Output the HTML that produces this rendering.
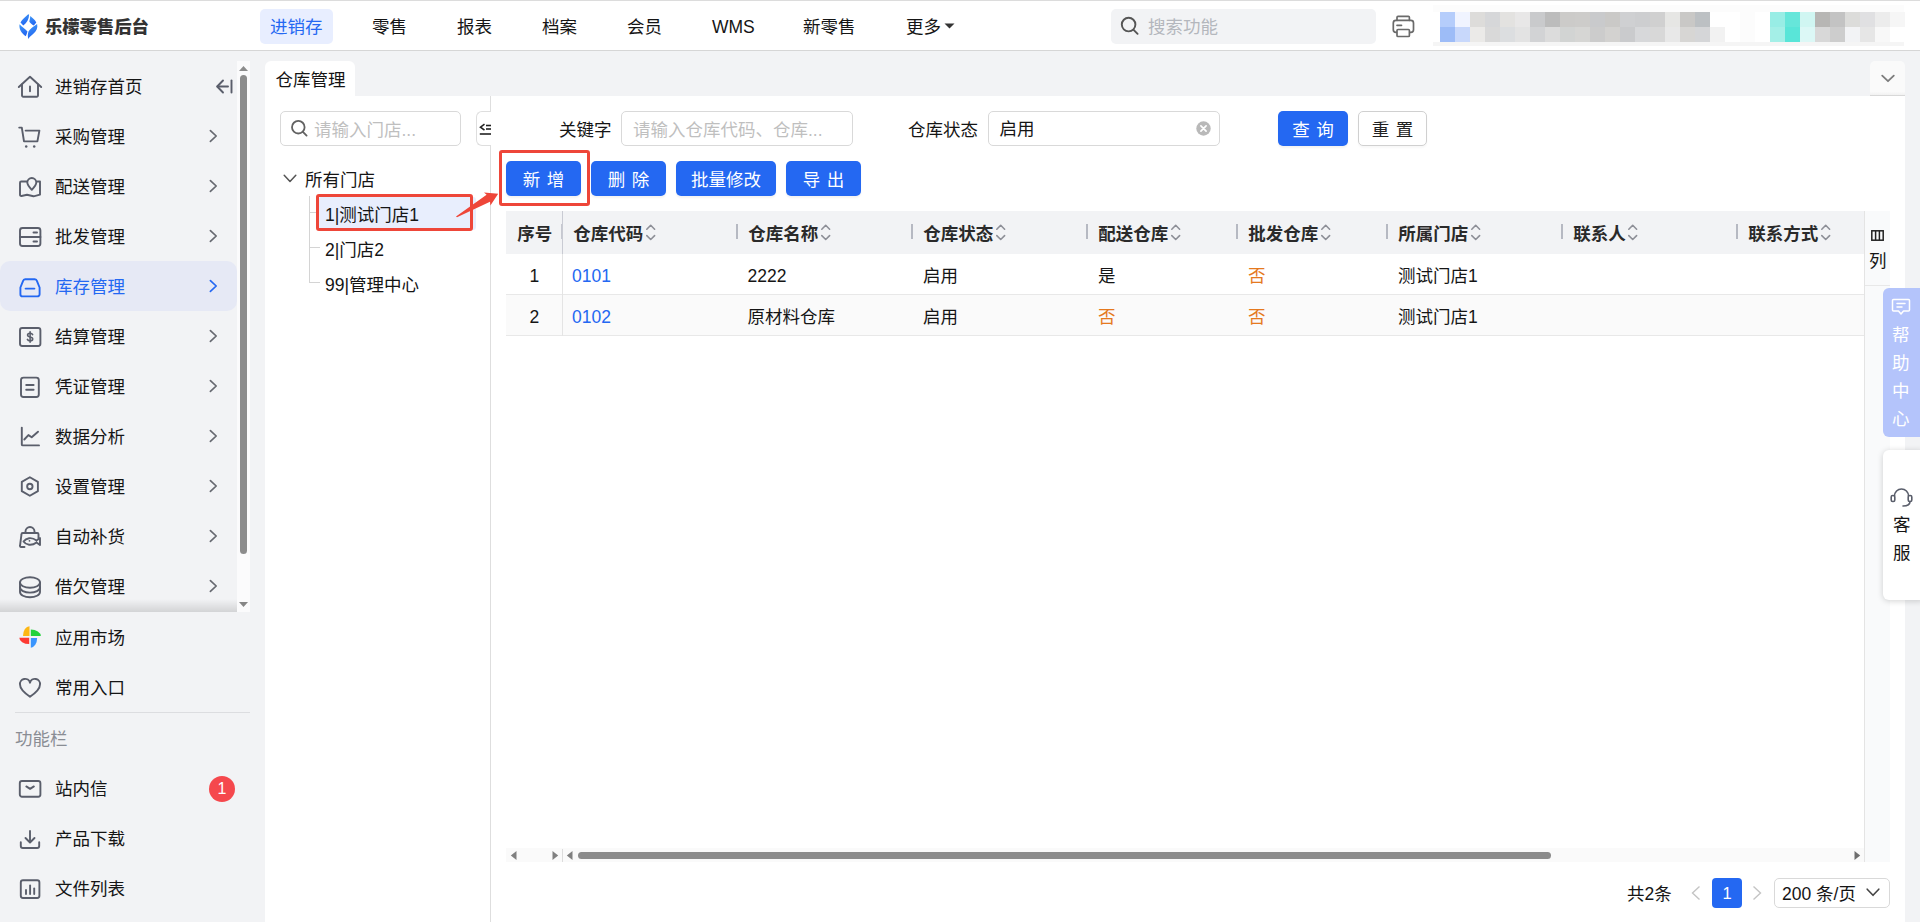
<!DOCTYPE html>
<html lang="zh-CN">
<head>
<meta charset="utf-8">
<title>仓库管理</title>
<style>
*{box-sizing:border-box;margin:0;padding:0}
html,body{width:1920px;height:922px;overflow:hidden;background:#f2f3f5}
body{font-family:"Liberation Sans","Noto Sans CJK SC",sans-serif;font-size:17.5px;color:#151515;position:relative}
.abs{position:absolute}
.t{position:absolute;white-space:nowrap;line-height:24px;height:24px;margin-top:1px}
svg{position:absolute;overflow:visible}
/* header */
#hdr{left:0;top:0;width:1920px;height:51px;background:#fff;border-top:1px solid #dcdcdc;border-bottom:1px solid #d6d6d6}
.nav{top:14px}
/* sidebar */
.mi{position:absolute;left:0;width:236px;height:50px}
.mi .t{left:55px;top:13px}
.ic{stroke:#5a5e6b;fill:none;stroke-width:1.9;stroke-linecap:round;stroke-linejoin:round}
.chev{stroke:#5a5e6b;fill:none;stroke-width:1.9;stroke-linecap:round;stroke-linejoin:round}
/* buttons */
.btn{position:absolute;word-spacing:1.500px;height:35px;border-radius:5px;background:#2468f2;color:#fff;text-align:center;line-height:38px;white-space:nowrap}
.inp{position:absolute;height:35px;border:1px solid #d9d9d9;border-radius:5px;background:#fff}
.ph{color:#bfbfbf}
.th{position:absolute;top:221.500px;font-weight:700;color:#2a2a2a;white-space:nowrap;line-height:24px}
.sep{position:absolute;top:224px;width:2px;height:15px;background:#b6b9c2}
.td{position:absolute;white-space:nowrap;line-height:24px}
.lnk{color:#2468f2}
.or{color:#e5791f}
</style>
</head>
<body>
<!-- HEADER -->
<div id="hdr" class="abs"></div>
<div id="logo">
<svg style="left:18.8px;top:13.9px" width="19" height="25" viewBox="0 0 19 25">
<defs><linearGradient id="lg" x1="0" y1="0" x2="0.3" y2="1"><stop offset="0" stop-color="#3f98f6"/><stop offset="1" stop-color="#2367f2"/></linearGradient></defs>
<path d="M9.2 0.3 C6.5 3 3 5.5 1.5 8.6 L4.3 11.6 C8 9 10 5 10.1 0.8 Z" fill="url(#lg)"/>
<path d="M11.3 2.1 C13.5 4 16 6 17.3 8.4 L14.8 11.6 C13 10.5 11.3 9 10.3 7.4 C10.9 5.6 11.2 3.8 11.3 2.1 Z" fill="url(#lg)"/>
<path d="M0.5 10.2 C3 13 6.5 15 8.5 17.5 C8 19.2 7.4 20.8 6.8 22.3 C3 19.5 -0.2 15.5 0.5 10.2 Z" fill="url(#lg)"/>
<path d="M18.1 9.9 C15 12.5 11 14.5 9.6 17.2 C8.6 20 8.6 22.8 9.4 25 C10.5 22.5 13 21 14.6 19.5 C17.5 16.8 19 13.5 18.1 9.9 Z" fill="url(#lg)"/>
</svg>
<div class="t" style="left:45px;top:14px;font-weight:900;font-size:17.4px;color:#333;letter-spacing:-0.1px">乐檬零售后台</div>
</div>
<div id="nav">
<div class="abs" style="left:260px;top:9px;width:73px;height:35px;border-radius:5px;background:#e8eeff"></div>
<div class="t nav" style="left:270px;color:#2468f2">进销存</div>
<div class="t nav" style="left:372px">零售</div>
<div class="t nav" style="left:457px">报表</div>
<div class="t nav" style="left:542px">档案</div>
<div class="t nav" style="left:627px">会员</div>
<div class="t nav" style="left:712px">WMS</div>
<div class="t nav" style="left:803px">新零售</div>
<div class="t nav" style="left:906px">更多</div>
<svg style="left:944px;top:23px" width="11" height="6" viewBox="0 0 11 6"><path d="M0.5 0.5 L10.5 0.5 L5.5 5.5 Z" fill="#333"/></svg>
<div class="abs" style="left:1111px;top:9px;width:265px;height:35px;border-radius:5px;background:#f2f3f5"></div>
<svg style="left:1120px;top:16px" width="20" height="20" viewBox="0 0 20 20"><circle cx="8.6" cy="8.6" r="6.8" fill="none" stroke="#555" stroke-width="1.9"/><path d="M13.6 13.8 L17.6 17.8" stroke="#555" stroke-width="1.9" stroke-linecap="round"/></svg>
<div class="t nav" style="left:1148px;color:#b4b7bd">搜索功能</div>
<svg style="left:1390px;top:12px" width="28" height="28" viewBox="1390 12 28 28" fill="none" stroke="#6a6a6a" stroke-width="1.700" stroke-linejoin="round" stroke-linecap="round"><path d="M1397 20.300 V17.400 a1 1 0 0 1 1 -1 H1408.400 a1 1 0 0 1 1 1 V20.300"/><rect x="1393.300" y="20.300" width="20.200" height="12" rx="2.600"/><rect x="1397" y="29.500" width="12.400" height="7" rx="1" fill="#fff"/><path d="M1397 25.300 h4.500"/></svg>
<svg id="mosaic" style="left:1433px;top:5px" width="472" height="42" viewBox="0 0 472 42" shape-rendering="crispEdges"><rect x="0" y="0" width="471" height="7" fill="#fcfcfc"/><rect x="0" y="37" width="471" height="4" fill="#f5f5f5"/><rect x="7" y="7" width="15" height="15" fill="#b5cdfb"/><rect x="22" y="7" width="15" height="15" fill="#f0f4ff"/><rect x="37" y="7" width="15" height="15" fill="#dddcda"/><rect x="52" y="7" width="15" height="15" fill="#d6d7d9"/><rect x="67" y="7" width="15" height="15" fill="#e3e2e0"/><rect x="82" y="7" width="15" height="15" fill="#e8e7e7"/><rect x="97" y="7" width="15" height="15" fill="#c9cacc"/><rect x="112" y="7" width="15" height="15" fill="#bcbcbc"/><rect x="127" y="7" width="15" height="15" fill="#cccbc9"/><rect x="142" y="7" width="15" height="15" fill="#cdccca"/><rect x="157" y="7" width="15" height="15" fill="#c9cacc"/><rect x="172" y="7" width="15" height="15" fill="#cac9c7"/><rect x="187" y="7" width="15" height="15" fill="#cfd0d2"/><rect x="202" y="7" width="15" height="15" fill="#cdced0"/><rect x="217" y="7" width="15" height="15" fill="#d0d0d0"/><rect x="232" y="7" width="15" height="15" fill="#e6e6e4"/><rect x="247" y="7" width="15" height="15" fill="#c9c8c6"/><rect x="262" y="7" width="15" height="15" fill="#bcc0c3"/><rect x="277" y="7" width="15" height="15" fill="#ffffff"/><rect x="292" y="7" width="15" height="15" fill="#ffffff"/><rect x="307" y="7" width="15" height="15" fill="#fcfcfc"/><rect x="322" y="7" width="15" height="15" fill="#ffffff"/><rect x="337" y="7" width="15" height="15" fill="#98ede5"/><rect x="352" y="7" width="15" height="15" fill="#66e6da"/><rect x="367" y="7" width="15" height="15" fill="#d0f6f2"/><rect x="382" y="7" width="15" height="15" fill="#b7b6b4"/><rect x="397" y="7" width="15" height="15" fill="#c3c3c3"/><rect x="412" y="7" width="15" height="15" fill="#dcdcda"/><rect x="427" y="7" width="15" height="15" fill="#e0e0e2"/><rect x="442" y="7" width="15" height="15" fill="#ececec"/><rect x="457" y="7" width="15" height="15" fill="#f6f6f6"/><rect x="7" y="22" width="15" height="15" fill="#9dbcf7"/><rect x="22" y="22" width="15" height="15" fill="#c8d8fb"/><rect x="37" y="22" width="15" height="15" fill="#ebeae8"/><rect x="52" y="22" width="15" height="15" fill="#d9d9d9"/><rect x="67" y="22" width="15" height="15" fill="#dcdee0"/><rect x="82" y="22" width="15" height="15" fill="#e3e3e3"/><rect x="97" y="22" width="15" height="15" fill="#d2d3d5"/><rect x="112" y="22" width="15" height="15" fill="#dcdcdc"/><rect x="127" y="22" width="15" height="15" fill="#d2d4d3"/><rect x="142" y="22" width="15" height="15" fill="#d6d6d4"/><rect x="157" y="22" width="15" height="15" fill="#cccccc"/><rect x="172" y="22" width="15" height="15" fill="#d3d2d0"/><rect x="187" y="22" width="15" height="15" fill="#cacbcd"/><rect x="202" y="22" width="15" height="15" fill="#d7d8da"/><rect x="217" y="22" width="15" height="15" fill="#d8d8d8"/><rect x="232" y="22" width="15" height="15" fill="#e8e8e8"/><rect x="247" y="22" width="15" height="15" fill="#d7d6d4"/><rect x="262" y="22" width="15" height="15" fill="#d5d6d8"/><rect x="277" y="22" width="15" height="15" fill="#f2f2f2"/><rect x="292" y="22" width="15" height="15" fill="#ffffff"/><rect x="307" y="22" width="15" height="15" fill="#fcfcfc"/><rect x="322" y="22" width="15" height="15" fill="#ffffff"/><rect x="337" y="22" width="15" height="15" fill="#a4efe7"/><rect x="352" y="22" width="15" height="15" fill="#59e5d8"/><rect x="367" y="22" width="15" height="15" fill="#dcf8f6"/><rect x="382" y="22" width="15" height="15" fill="#d8d8d8"/><rect x="397" y="22" width="15" height="15" fill="#cdcdcd"/><rect x="412" y="22" width="15" height="15" fill="#f2f3f5"/><rect x="427" y="22" width="15" height="15" fill="#e6e6e6"/><rect x="442" y="22" width="15" height="15" fill="#f8f8f8"/><rect x="457" y="22" width="15" height="15" fill="#ffffff"/></svg>
</div>
<!-- SIDEBAR -->
<div id="side">
<div class="abs" style="left:0;top:261px;width:237px;height:50px;border-radius:10px;background:#e6e9f5"></div>
<svg style="left:18px;top:75px;stroke:#5a5e6b" width="24" height="24" viewBox="0 0 24 24" class="ic"><path d="M0.800 12 L12 1.800 L23.200 12"/><path d="M4 9.500 V20.600 a1.200 1.200 0 0 0 1.200 1.200 H18.800 a1.200 1.200 0 0 0 1.200 -1.200 V9.500"/><path d="M12 11.500 v4.800"/></svg>
<div class="t" style="left:55px;top:74px;">进销存首页</div>
<svg style="left:18px;top:125px;stroke:#5a5e6b" width="24" height="24" viewBox="0 0 24 24" class="ic"><path d="M1.200 2.600 h2.600 l2.200 13.800 h13.400 l2 -10.800 H7.600"/><circle cx="8.200" cy="21.600" r="1.250" fill="#5a5e6b" stroke="none"/><circle cx="16.200" cy="21.600" r="1.250" fill="#5a5e6b" stroke="none"/></svg>
<div class="t" style="left:55px;top:124px;">采购管理</div>
<svg style="left:209px;top:129px;stroke:#666970;stroke-width:1.700" width="9" height="14" viewBox="0 0 9 14" class="chev"><path d="M1.400 1.600 L7.200 7 L1.400 12.400"/></svg>
<svg style="left:18px;top:175px;stroke:#5a5e6b" width="24" height="24" viewBox="0 0 24 24" class="ic"><path d="M8.500 6.500 H3.200 a1.200 1.200 0 0 0 -1.200 1.200 V19.800 a1.200 1.200 0 0 0 1.500 1.200 L9 19.800 l6.500 1.500 l6.500 -1.600 V6.500 h-2.500"/><path d="M13.800 14.800 c-3 -3.200 -4.500 -5 -4.500 -7.300 a4.500 4.500 0 0 1 9 0 c0 2.300 -1.500 4.100 -4.500 7.300z"/></svg>
<div class="t" style="left:55px;top:174px;">配送管理</div>
<svg style="left:209px;top:179px;stroke:#666970;stroke-width:1.700" width="9" height="14" viewBox="0 0 9 14" class="chev"><path d="M1.400 1.600 L7.200 7 L1.400 12.400"/></svg>
<svg style="left:18px;top:225px;stroke:#5a5e6b" width="24" height="24" viewBox="0 0 24 24" class="ic"><rect x="2" y="3" width="20.400" height="18" rx="2.500"/><path d="M2 12 H22.400"/><path d="M15.500 7.500 h3.500"/><path d="M15.500 16.500 h3.500"/></svg>
<div class="t" style="left:55px;top:224px;">批发管理</div>
<svg style="left:209px;top:229px;stroke:#666970;stroke-width:1.700" width="9" height="14" viewBox="0 0 9 14" class="chev"><path d="M1.400 1.600 L7.200 7 L1.400 12.400"/></svg>
<svg style="left:18px;top:275px;stroke:#2468f2" width="24" height="24" viewBox="0 0 24 24" class="ic"><path d="M7.200 4.200 H16.800 a2.200 2.200 0 0 1 2.100 1.700 L21.600 12.500 V19.200 a2.200 2.200 0 0 1 -2.200 2.200 H4.600 a2.200 2.200 0 0 1 -2.200 -2.200 V12.500 L5.100 5.900 a2.200 2.200 0 0 1 2.100 -1.700z"/><path d="M7.600 13.600 h8.800"/></svg>
<div class="t" style="left:55px;top:274px;color:#2468f2;">库存管理</div>
<svg style="left:209px;top:279px;stroke:#2468f2;stroke-width:1.700" width="9" height="14" viewBox="0 0 9 14" class="chev"><path d="M1.400 1.600 L7.200 7 L1.400 12.400"/></svg>
<svg style="left:18px;top:325px;stroke:#5a5e6b" width="24" height="24" viewBox="0 0 24 24" class="ic"><rect x="2" y="3" width="20.400" height="18" rx="2.200"/><path d="M14.600 9.600 c-0.400 -0.900 -1.300 -1.300 -2.500 -1.300 c-1.500 0 -2.500 0.700 -2.500 1.800 c0 1.100 1 1.600 2.500 1.900 c1.500 0.300 2.600 0.700 2.600 1.900 c0 1.200 -1.100 1.900 -2.600 1.900 c-1.300 0 -2.300 -0.500 -2.700 -1.400" stroke-width="1.600"/><path d="M12.100 6.800 v10.400" stroke-width="1.600"/></svg>
<div class="t" style="left:55px;top:324px;">结算管理</div>
<svg style="left:209px;top:329px;stroke:#666970;stroke-width:1.700" width="9" height="14" viewBox="0 0 9 14" class="chev"><path d="M1.400 1.600 L7.200 7 L1.400 12.400"/></svg>
<svg style="left:18px;top:375px;stroke:#5a5e6b" width="24" height="24" viewBox="0 0 24 24" class="ic"><rect x="3" y="2.600" width="17.800" height="19.400" rx="2.500"/><path d="M8.200 10 h7.400"/><path d="M8.200 14.800 h7.400"/></svg>
<div class="t" style="left:55px;top:374px;">凭证管理</div>
<svg style="left:209px;top:379px;stroke:#666970;stroke-width:1.700" width="9" height="14" viewBox="0 0 9 14" class="chev"><path d="M1.400 1.600 L7.200 7 L1.400 12.400"/></svg>
<svg style="left:18px;top:425px;stroke:#5a5e6b" width="24" height="24" viewBox="0 0 24 24" class="ic"><path d="M3.800 2.600 V19.400 a1 1 0 0 0 1 1 H21"/><path d="M6.300 14.500 l4.100 -4.400 l3.300 2.200 l6.300 -5.600"/></svg>
<div class="t" style="left:55px;top:424px;">数据分析</div>
<svg style="left:209px;top:429px;stroke:#666970;stroke-width:1.700" width="9" height="14" viewBox="0 0 9 14" class="chev"><path d="M1.400 1.600 L7.200 7 L1.400 12.400"/></svg>
<svg style="left:18px;top:475px;stroke:#5a5e6b" width="24" height="24" viewBox="0 0 24 24" class="ic"><path d="M11.850 2.200 L19.900 6.850 V16.150 L11.850 20.800 L3.800 16.150 V6.850 Z"/><circle cx="11.850" cy="11.500" r="2.700"/></svg>
<div class="t" style="left:55px;top:474px;">设置管理</div>
<svg style="left:209px;top:479px;stroke:#666970;stroke-width:1.700" width="9" height="14" viewBox="0 0 9 14" class="chev"><path d="M1.400 1.600 L7.200 7 L1.400 12.400"/></svg>
<svg style="left:18px;top:525px;stroke:#5a5e6b" width="24" height="24" viewBox="0 0 24 24" class="ic"><path d="M7.500 8 V6.500 a4.500 4.500 0 0 1 9 0 V8"/><path d="M20.500 13 V9.200 a1.200 1.200 0 0 0 -1.200 -1.200 H4.700 a1.200 1.200 0 0 0 -1.200 1.200 L2 20.800 a1 1 0 0 0 1 1.200 H6.500"/><path d="M5.500 16.500 c2.500 -3.500 8 -5 13 -1 l3.500 -2.500 v7 l-3.500 -2.500 c-5 3.800 -10.500 2.500 -13 -1z"/><circle cx="11.500" cy="15.800" r="0.900" fill="#5a5e6b" stroke="none"/></svg>
<div class="t" style="left:55px;top:524px;">自动补货</div>
<svg style="left:209px;top:529px;stroke:#666970;stroke-width:1.700" width="9" height="14" viewBox="0 0 9 14" class="chev"><path d="M1.400 1.600 L7.200 7 L1.400 12.400"/></svg>
<svg style="left:18px;top:575px;stroke:#5a5e6b" width="24" height="24" viewBox="0 0 24 24" class="ic"><ellipse cx="12" cy="7.500" rx="10" ry="5.300"/><path d="M2 7.500 V17 c0 3 4.500 5.300 10 5.300 s10 -2.300 10 -5.300 V7.500"/><path d="M2 12.300 c0 3 4.500 5.300 10 5.300 s10 -2.300 10 -5.300"/></svg>
<div class="t" style="left:55px;top:574px;">借欠管理</div>
<svg style="left:209px;top:579px;stroke:#666970;stroke-width:1.700" width="9" height="14" viewBox="0 0 9 14" class="chev"><path d="M1.400 1.600 L7.200 7 L1.400 12.400"/></svg>
<svg style="left:216px;top:79px" width="17" height="15" viewBox="0 0 17 15" class="chev"><path d="M7 1.500 L1.200 7.500 L7 13.500"/><path d="M1.500 7.500 H12"/><path d="M15.500 1.500 V13.500"/></svg>
<div class="abs" style="left:237px;top:61px;width:13px;height:551px;background:#fbfbfc"></div>
<svg style="left:239px;top:66px" width="9" height="5" viewBox="0 0 9 5"><path d="M0 5 L4.500 0 L9 5Z" fill="#8c8c8c"/></svg>
<div class="abs" style="left:240px;top:75px;width:7px;height:479px;border-radius:4px;background:#8c8c8c"></div>
<svg style="left:239px;top:602px" width="9" height="5" viewBox="0 0 9 5"><path d="M0 0 L4.500 5 L9 0Z" fill="#868686"/></svg>
<div class="abs" style="left:0;top:599px;width:237px;height:13px;background:linear-gradient(to bottom,rgba(0,0,0,0),rgba(0,0,0,0.13))"></div>
<svg style="left:18px;top:624px" width="24" height="26" viewBox="18 624 24 26">
<path d="M29.500 626.200 A6.500 9.800 0 0 0 23 636 L29.500 636 Z" fill="#fdb714"/>
<path d="M30.800 629.600 A10 6.400 0 0 1 40.800 636 L30.800 636 Z" fill="#23d23b"/>
<path d="M37.100 638 A6.300 9.700 0 0 1 30.800 647.700 L30.800 638 Z" fill="#3a95fd"/>
<path d="M19.300 637.800 A9.900 6.300 0 0 0 29.200 644.100 L29.200 637.800 Z" fill="#fd3a33"/>
</svg>
<div class="t" style="left:55px;top:625px">应用市场</div>
<svg style="left:18px;top:676px" width="24" height="24" viewBox="0 0 24 24" class="ic"><path d="M12 20.800 C5.200 16.200 2 12.400 2 8.600 a5.100 5.100 0 0 1 10 -1.900 a5.100 5.100 0 0 1 10 1.900 c0 3.800 -3.200 7.600 -10 12.200z"/></svg>
<div class="t" style="left:55px;top:675px">常用入口</div>
<div class="abs" style="left:15px;top:712px;width:235px;height:1px;background:#dcdde0"></div>
<div class="t" style="left:15px;top:726px;color:#8a8d94">功能栏</div>
<svg style="left:18px;top:777px" width="24" height="24" viewBox="0 0 24 24" class="ic"><rect x="1.800" y="4" width="20.600" height="15.800" rx="2.200"/><path d="M8.300 9.400 l3.800 2.500 l3.800 -2.500"/></svg>
<div class="t" style="left:55px;top:776px">站内信</div>
<svg style="left:18px;top:827px" width="24" height="24" viewBox="0 0 24 24" class="ic"><path d="M12 4 V15"/><path d="M7.500 11 l4.500 4.500 l4.500 -4.500"/><path d="M2.800 15.200 V19 a2 2 0 0 0 2 2 H19.200 a2 2 0 0 0 2 -2 V15.200"/></svg>
<div class="t" style="left:55px;top:826px">产品下载</div>
<svg style="left:18px;top:877px" width="24" height="24" viewBox="0 0 24 24" class="ic"><rect x="2.800" y="3.200" width="18.600" height="17.800" rx="2.200"/><path d="M8 13 v4"/><path d="M12.100 8.500 v8.500"/><path d="M16.200 11.500 v5.500"/></svg>
<div class="t" style="left:55px;top:876px">文件列表</div>
<div class="abs" style="left:209px;top:776px;width:26px;height:26px;border-radius:13px;background:#f5484d;color:#fff;text-align:center;line-height:26px;font-size:16px;font-weight:400">1</div>
</div>
<!-- MAIN -->
<div id="main">
<div class="abs" style="left:265px;top:61px;width:90px;height:36px;background:#fff;border-radius:6px 6px 0 0"></div>
<div class="t" style="left:275.500px;top:67px">仓库管理</div>
<div class="abs" style="left:1870px;top:61px;width:35px;height:35px;background:linear-gradient(to bottom,#fafafa 0,#fafafa 90%,#f1f1f1 100%);border-radius:5px 5px 0 0;border-bottom:1px solid #d8d8d8"></div>
<svg style="left:1881px;top:74px" width="14" height="8" viewBox="0 0 14 8"><path d="M1.200 1.600 L7 7.200 L12.800 1.600" fill="none" stroke="#7c7c7c" stroke-width="1.800" stroke-linecap="round" stroke-linejoin="round"/></svg>
<div class="abs" style="left:265px;top:96px;width:1640px;height:826px;background:#fff"></div>
<div class="abs" style="left:490px;top:96px;width:1px;height:826px;background:#dedede"></div>
<div class="inp" style="left:280px;top:111px;width:181px"></div>
<svg style="left:289px;top:118px" width="20" height="20" viewBox="0 0 20 20"><circle cx="9.300" cy="9.200" r="6.300" fill="none" stroke="#626262" stroke-width="1.800"/><path d="M13.900 13.900 L17.600 17.600" stroke="#626262" stroke-width="1.800" stroke-linecap="round"/></svg>
<div class="t ph" style="left:314px;top:117px">请输入门店...</div>
<div class="abs" style="left:476px;top:111px;width:15px;height:35px;background:#fff;border:1px solid #dedede;border-right:none;border-radius:6px 0 0 6px"></div>
<svg style="left:479px;top:123px" width="12" height="13" viewBox="0 0 12 13" fill="none" stroke="#222" stroke-width="1.600"><path d="M5.500 1.200 L1.500 4.200 L5.500 7.200"/><path d="M7 2.500 H12"/><path d="M7 6 H12"/><path d="M0.800 11 H12"/></svg>
<svg style="left:283px;top:174px" width="14" height="9" viewBox="0 0 14 9"><path d="M1.200 1.200 L7 7.500 L12.800 1.200" fill="none" stroke="#555" stroke-width="1.500" stroke-linecap="round" stroke-linejoin="round"/></svg>
<div class="t" style="left:305px;top:166.500px">所有门店</div>
<div class="abs" style="left:309px;top:196px;width:1px;height:87px;background:#d4d4d4"></div>
<div class="abs" style="left:309px;top:212px;width:11px;height:1px;background:#d4d4d4"></div>
<div class="abs" style="left:309px;top:247px;width:11px;height:1px;background:#d4d4d4"></div>
<div class="abs" style="left:309px;top:282px;width:11px;height:1px;background:#d4d4d4"></div>
<div class="abs" style="left:318px;top:197px;width:158px;height:33px;border-radius:3px;background:#e8eefd"></div>
<div class="t" style="left:325px;top:202px">1|测试门店1</div>
<div class="t" style="left:325px;top:237px">2|门店2</div>
<div class="t" style="left:325px;top:272px">99|管理中心</div>
<div class="abs" style="left:316px;top:194px;width:157px;height:37px;border:3px solid #ee4639;border-radius:3px"></div>
<div class="abs" style="left:499px;top:150px;width:91px;height:56px;border:3px solid #ee4639;border-radius:3px"></div>
<svg style="left:450px;top:185px" width="50" height="35" viewBox="450 185 50 35"><path d="M456 216.400 L486.600 194.800 L484 192.400 L498.200 193.700 L490.400 205.400 L490 201.800 L457 217.200 Z" fill="#ee4639"/></svg>
<div class="t" style="left:559px;top:117px">关键字</div>
<div class="inp" style="left:621px;top:111px;width:232px"></div>
<div class="t ph" style="left:633px;top:117px">请输入仓库代码、仓库...</div>
<div class="t" style="left:908px;top:117px">仓库状态</div>
<div class="inp" style="left:988px;top:111px;width:232px"></div>
<div class="t" style="left:999.500px;top:116.300px">启用</div>
<svg style="left:1196px;top:121px" width="15" height="15" viewBox="0 0 15 15"><circle cx="7.500" cy="7.500" r="7.200" fill="#b9b9b9"/><path d="M4.900 4.900 L10.100 10.100 M10.100 4.900 L4.900 10.100" stroke="#fff" stroke-width="1.700" stroke-linecap="round"/></svg>
<div class="btn" style="left:1278px;top:111px;width:70px;box-shadow:0 2px 2px rgba(0,0,0,0.05)">查 询</div>
<div class="btn" style="left:1358px;top:111px;width:69px;background:#fff;border:1px solid #d0d0d0;color:#222;line-height:36px;box-shadow:0 2px 2px rgba(0,0,0,0.03)">重 置</div>
<div class="btn" style="left:506px;top:161px;width:75px;box-shadow:0 2px 2px rgba(0,0,0,0.05)">新 增</div>
<div class="btn" style="left:591px;top:161px;width:75px;box-shadow:0 2px 2px rgba(0,0,0,0.05)">删 除</div>
<div class="btn" style="left:676px;top:161px;width:100px;box-shadow:0 2px 2px rgba(0,0,0,0.05)">批量修改</div>
<div class="btn" style="left:786px;top:161px;width:75px;box-shadow:0 2px 2px rgba(0,0,0,0.05)">导 出</div>
<div class="abs" style="left:506px;top:211px;width:1358px;height:43px;background:#f2f3f5"></div>
<div class="abs" style="left:506px;top:295px;width:1358px;height:40px;background:#fafafa"></div>
<div class="abs" style="left:506px;top:294px;width:1358px;height:1px;background:#e8e8e8"></div>
<div class="abs" style="left:506px;top:335px;width:1358px;height:1px;background:#e8e8e8"></div>
<div class="abs" style="left:562px;top:211px;width:1px;height:43px;background:#c9cbd3"></div>
<div class="abs" style="left:562px;top:254px;width:1px;height:82px;background:#e4e4e4"></div>
<div class="th" style="left:517.300px">序号</div>
<div class="th" style="left:573.3px">仓库代码</div>
<svg style="left:644.5px;top:224px" width="11" height="17" viewBox="0 0 11 17" fill="none" stroke="#8d8f97" stroke-width="1.600" stroke-linecap="round" stroke-linejoin="round"><path d="M1.800 5.200 L5.700 1.300 L9.600 5.200"/><path d="M1.800 11.600 L5.700 15.500 L9.600 11.600"/></svg>
<div class="th" style="left:748.3px">仓库名称</div>
<svg style="left:819.5px;top:224px" width="11" height="17" viewBox="0 0 11 17" fill="none" stroke="#8d8f97" stroke-width="1.600" stroke-linecap="round" stroke-linejoin="round"><path d="M1.800 5.200 L5.700 1.300 L9.600 5.200"/><path d="M1.800 11.600 L5.700 15.500 L9.600 11.600"/></svg>
<div class="th" style="left:923.3px">仓库状态</div>
<svg style="left:994.5px;top:224px" width="11" height="17" viewBox="0 0 11 17" fill="none" stroke="#8d8f97" stroke-width="1.600" stroke-linecap="round" stroke-linejoin="round"><path d="M1.800 5.200 L5.700 1.300 L9.600 5.200"/><path d="M1.800 11.600 L5.700 15.500 L9.600 11.600"/></svg>
<div class="th" style="left:1098.3px">配送仓库</div>
<svg style="left:1169.5px;top:224px" width="11" height="17" viewBox="0 0 11 17" fill="none" stroke="#8d8f97" stroke-width="1.600" stroke-linecap="round" stroke-linejoin="round"><path d="M1.800 5.200 L5.700 1.300 L9.600 5.200"/><path d="M1.800 11.600 L5.700 15.500 L9.600 11.600"/></svg>
<div class="th" style="left:1248.3px">批发仓库</div>
<svg style="left:1319.5px;top:224px" width="11" height="17" viewBox="0 0 11 17" fill="none" stroke="#8d8f97" stroke-width="1.600" stroke-linecap="round" stroke-linejoin="round"><path d="M1.800 5.200 L5.700 1.300 L9.600 5.200"/><path d="M1.800 11.600 L5.700 15.500 L9.600 11.600"/></svg>
<div class="th" style="left:1398.3px">所属门店</div>
<svg style="left:1469.5px;top:224px" width="11" height="17" viewBox="0 0 11 17" fill="none" stroke="#8d8f97" stroke-width="1.600" stroke-linecap="round" stroke-linejoin="round"><path d="M1.800 5.200 L5.700 1.300 L9.600 5.200"/><path d="M1.800 11.600 L5.700 15.500 L9.600 11.600"/></svg>
<div class="th" style="left:1573.3px">联系人</div>
<svg style="left:1627.0px;top:224px" width="11" height="17" viewBox="0 0 11 17" fill="none" stroke="#8d8f97" stroke-width="1.600" stroke-linecap="round" stroke-linejoin="round"><path d="M1.800 5.200 L5.700 1.300 L9.600 5.200"/><path d="M1.800 11.600 L5.700 15.500 L9.600 11.600"/></svg>
<div class="th" style="left:1748.3px">联系方式</div>
<svg style="left:1819.5px;top:224px" width="11" height="17" viewBox="0 0 11 17" fill="none" stroke="#8d8f97" stroke-width="1.600" stroke-linecap="round" stroke-linejoin="round"><path d="M1.800 5.200 L5.700 1.300 L9.600 5.200"/><path d="M1.800 11.600 L5.700 15.500 L9.600 11.600"/></svg>
<div class="sep" style="left:736px"></div>
<div class="sep" style="left:911px"></div>
<div class="sep" style="left:1086px"></div>
<div class="sep" style="left:1236px"></div>
<div class="sep" style="left:1386px"></div>
<div class="sep" style="left:1561px"></div>
<div class="sep" style="left:1736px"></div>
<div class="sep" style="left:560.500px;width:1px;background:#c6c8d0"></div>
<div class="td" style="left:529.500px;top:263.5px">1</div>
<div class="td lnk" style="left:572px;top:263.5px">0101</div>
<div class="td" style="left:747.500px;top:263.5px">2222</div>
<div class="td" style="left:923px;top:263.5px">启用</div>
<div class="td " style="left:1098px;top:263.5px">是</div>
<div class="td or" style="left:1248px;top:263.5px">否</div>
<div class="td" style="left:1398px;top:263.5px">测试门店1</div>
<div class="td" style="left:529.500px;top:304.5px">2</div>
<div class="td lnk" style="left:572px;top:304.5px">0102</div>
<div class="td" style="left:747.500px;top:304.5px">原材料仓库</div>
<div class="td" style="left:923px;top:304.5px">启用</div>
<div class="td or" style="left:1098px;top:304.5px">否</div>
<div class="td or" style="left:1248px;top:304.5px">否</div>
<div class="td" style="left:1398px;top:304.5px">测试门店1</div>
<div class="abs" style="left:1864px;top:211px;width:1px;height:651px;background:#e4e4e4"></div>
<div class="abs" style="left:1865px;top:211px;width:25px;height:75px;background:#f9fafb;border-bottom:1px solid #e8e8e8"></div>
<div class="abs" style="left:1865px;top:286px;width:25px;height:576px;background:#f9fafb"></div>
<svg style="left:1871px;top:230px" width="13" height="11" viewBox="0 0 13 11" fill="none" stroke="#222" stroke-width="1.500"><rect x="0.800" y="0.800" width="11.400" height="9.400"/><path d="M4.600 1 V10 M8.400 1 V10"/></svg>
<div class="t" style="left:1869px;top:248px">列</div>
<div class="abs" style="left:506px;top:848px;width:1358px;height:14px;background:#fafafa"></div>
<svg style="left:506px;top:848px" width="1358" height="15" viewBox="0 0 1358 15"><path d="M10.500 3 L4.800 7.500 L10.500 12Z" fill="#808080"/><path d="M46.500 3 L52.200 7.500 L46.500 12Z" fill="#808080"/><path d="M56.500 1 V14" stroke="#dcdcdc" stroke-width="1"/><path d="M66.500 3 L60.800 7.500 L66.500 12Z" fill="#808080"/><rect x="72" y="4" width="973" height="7" rx="3.500" fill="#8c8c8c"/><path d="M1348.500 3 L1354.200 7.500 L1348.500 12Z" fill="#6e6e6e"/></svg>
<div class="t" style="left:1627px;top:881px">共2条</div>
<svg style="left:1691px;top:885px" width="10" height="16" viewBox="0 0 10 16" fill="none" stroke="#c4c4c4" stroke-width="1.400"><path d="M8.500 1.500 L1.500 8 L8.500 14.500"/></svg>
<div class="abs" style="left:1712px;top:878px;width:30px;height:30px;border-radius:4px;background:#2468f2;color:#fff;text-align:center;line-height:30px;font-weight:400;font-size:16.500px">1</div>
<svg style="left:1752px;top:885px" width="10" height="16" viewBox="0 0 10 16" fill="none" stroke="#c4c4c4" stroke-width="1.400"><path d="M1.500 1.500 L8.500 8 L1.500 14.500"/></svg>
<div class="inp" style="left:1774px;top:878px;width:116px;height:30px"></div>
<div class="t" style="left:1782px;top:881px">200 条/页</div>
<svg style="left:1866px;top:888px" width="14" height="9" viewBox="0 0 14 9"><path d="M1.200 1.200 L7 7.300 L12.800 1.200" fill="none" stroke="#444" stroke-width="1.600" stroke-linecap="round" stroke-linejoin="round"/></svg>
<div class="abs" style="left:1883px;top:288px;width:37px;height:149px;background:#b4c4fb;border-radius:6px 0 0 6px"></div>
<svg style="left:1891px;top:298px" width="20" height="18" viewBox="0 0 20 18" fill="none" stroke="#fff" stroke-width="1.500" stroke-linejoin="round" stroke-linecap="round"><path d="M2.500 1.500 H17.500 a1 1 0 0 1 1 1 V12 a1 1 0 0 1 -1 1 H12.500 L10 16 L7.500 13 H2.500 a1 1 0 0 1 -1 -1 V2.500 a1 1 0 0 1 1 -1z"/><path d="M6 5.500 h8 M6 9 h5"/></svg>
<div class="t" style="left:1892px;top:322px;color:#fff">帮</div>
<div class="t" style="left:1892px;top:350px;color:#fff">助</div>
<div class="t" style="left:1892px;top:378px;color:#fff">中</div>
<div class="t" style="left:1892px;top:406px;color:#fff">心</div>
<div class="abs" style="left:1883px;top:450px;width:40px;height:150px;background:#fff;border-radius:6px 0 0 6px;box-shadow:0 1px 6px rgba(0,0,0,0.18)"></div>
<svg style="left:1890px;top:487px" width="23" height="21" viewBox="0 0 23 21" fill="none" stroke="#5a5e6b" stroke-width="1.600" stroke-linecap="round"><path d="M4.500 9 a7 7 0 0 1 14 0"/><rect x="1.200" y="8.500" width="3.600" height="6" rx="1.500"/><rect x="18.200" y="8.500" width="3.600" height="6" rx="1.500"/><path d="M20 14.500 c0 3 -3 4.500 -7 4.500"/></svg>
<div class="t" style="left:1893px;top:512px">客</div>
<div class="t" style="left:1893px;top:540px">服</div>
</div>
</body>
</html>
